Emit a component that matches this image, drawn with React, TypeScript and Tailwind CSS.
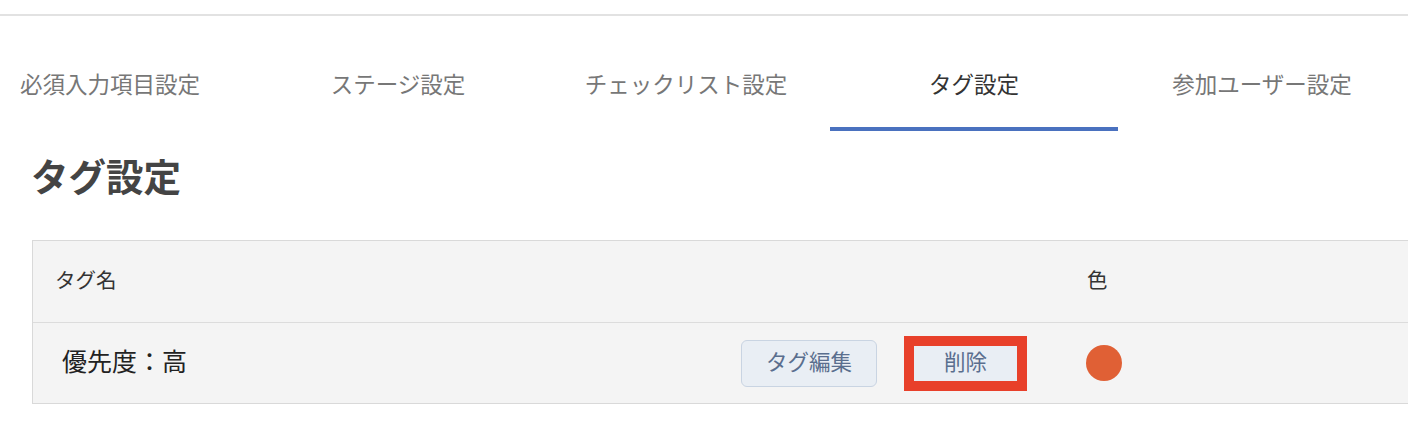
import React from "react";

const tabs = ["必須入力項目設定", "ステージ設定", "チェックリスト設定", "タグ設定", "参加ユーザー設定"];

export default function App() {
  return (
    <div
      className="w-[1408px] h-[422px] overflow-hidden bg-white"
      style={{ fontFamily: '"Noto Sans CJK JP", "Noto Sans", sans-serif' }}
    >
      <div className="h-[14px]" />
      <div className="border-t-2 border-[#e2e2e2]" />
      <div className="flex ml-[-34px]">
        {tabs.map((t, i) => {
          const active = i === 3;
          return (
            <div
              key={t}
              className={
                "w-[288px] shrink-0 pt-[51px] pb-[28px] text-center text-[22.5px] leading-[32px] border-b-4 " +
                (active ? "border-[#4a71bf] text-[#333333]" : "border-transparent text-[#777777]")
              }
            >
              {t}
            </div>
          );
        })}
      </div>
      <div className="px-[32px]">
        <h1 className="mt-[22px] ml-[-1px] text-[37.5px] leading-[44px] font-bold text-[#444444]">タグ設定</h1>
        <div className="mt-[43px] w-[1400px] border-l border-t border-b border-[#d9d9d9] bg-[#f4f4f4]">
          <div className="grid grid-cols-[1053px_1fr] h-[82px] items-center border-b border-[#dcdcdc] text-[20.5px] text-[#333333]">
            <div className="pl-[22px] pb-[4px]">タグ名</div>
            <div className="pl-[1px] pb-[4px]">色</div>
          </div>
          <div className="grid grid-cols-[1053px_1fr] h-[80px] items-center">
            <div className="flex items-center justify-between pl-[29px] pr-[59px]">
              <span className="text-[25px] text-[#222222] pb-[4px]">優先度：高</span>
              <div className="flex items-center gap-[27px]">
                <button className="w-[136px] h-[47px] rounded-[6px] border border-[#c9d4e2] bg-[#e9eef4] text-[21.5px] text-[#5a6e8e] pb-[3px]">
                  タグ編集
                </button>
                <button className="w-[123px] h-[55px] border-[10px] border-[#e8402a] bg-[#e9eef4] text-[21.5px] text-[#5a6e8e] flex items-center justify-center pb-[3px]">
                  削除
                </button>
              </div>
            </div>
            <div>
              <div className="w-[36px] h-[36px] rounded-full bg-[#e06035]" />
            </div>
          </div>
        </div>
      </div>
    </div>
  );
}
